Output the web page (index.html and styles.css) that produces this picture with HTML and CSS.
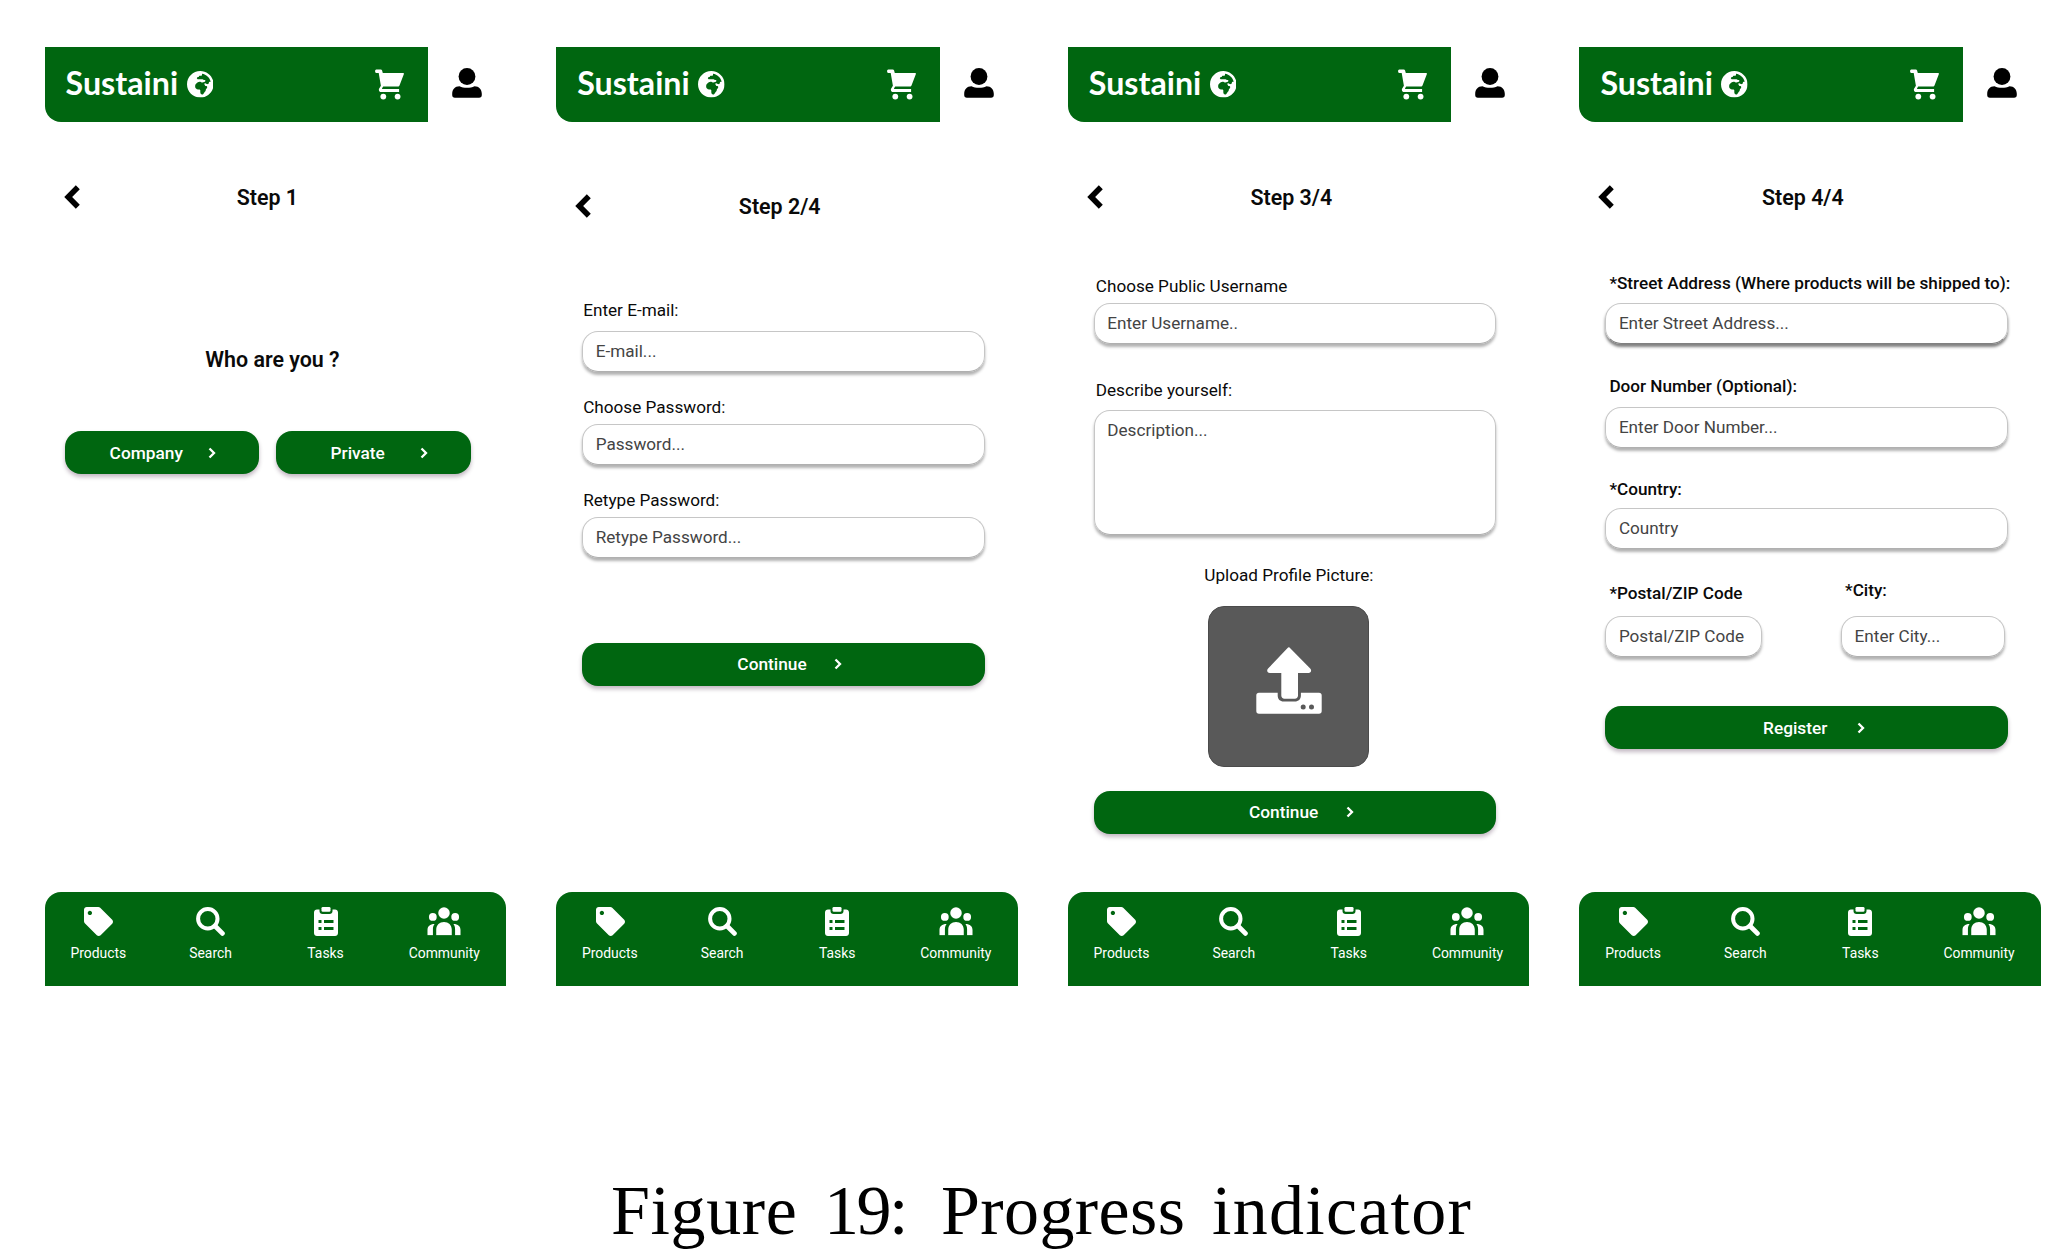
FILE: index.html
```
<!DOCTYPE html>
<html lang="en">
<head>
<meta charset="utf-8">
<title>Sustaini sign-up</title>
<link rel="stylesheet" href="styles.css">
</head>
<body>
<svg class="sprite" aria-hidden="true">
  <symbol id="globe" viewBox="0 8 496 496"><path d="M248 8C111.03 8 0 119.03 0 256s111.03 248 248 248 248-111.03 248-248S384.97 8 248 8zm160 215.5v6.93c0 5.87-3.32 11.24-8.57 13.86l-15.39 7.7a15.485 15.485 0 0 1-15.53-.97l-18.21-12.14a15.52 15.52 0 0 0-13.5-1.81l-2.65.88c-9.7 3.23-13.66 14.79-7.99 23.3l13.24 19.86c2.87 4.31 7.71 6.9 12.89 6.9h8.21c8.56 0 15.5 6.94 15.5 15.5v11.34c0 3.35-1.09 6.62-3.1 9.3l-18.74 24.98c-1.42 1.9-2.39 4.1-2.83 6.43l-4.3 22.83c-.62 3.29-2.29 6.29-4.76 8.56a159.608 159.608 0 0 0-25 29.16l-13.03 19.55a27.756 27.756 0 0 1-23.09 12.36c-10.51 0-20.12-5.94-24.82-15.34a78.902 78.902 0 0 1-8.33-35.29V367.5c0-8.56-6.94-15.5-15.5-15.5h-25.88c-14.49 0-28.38-5.76-38.63-16a54.659 54.659 0 0 1-16-38.63v-14.06c0-17.19 8.1-33.38 21.85-43.7l27.58-20.69a54.663 54.663 0 0 1 32.78-10.93h.89c8.48 0 16.85 1.97 24.43 5.77l14.72 7.36c3.68 1.84 7.93 2.14 11.83.84l47.31-15.77c6.33-2.11 10.6-8.03 10.6-14.7 0-8.56-6.94-15.5-15.5-15.5h-10.09c-4.11 0-8.05-1.63-10.96-4.54l-6.92-6.92a15.493 15.493 0 0 0-10.96-4.54H199.5c-8.56 0-15.5-6.94-15.5-15.5v-4.4c0-7.11 4.84-13.31 11.74-15.04l14.45-3.61c3.74-.94 7-3.23 9.14-6.44l8.08-12.11c2.87-4.31 7.71-6.9 12.89-6.9h24.21c8.56 0 15.5-6.94 15.5-15.5v-21.7C359.23 71.63 422.86 131.02 441.93 208H423.5c-8.56 0-15.5 6.94-15.5 15.5z"/></symbol>
  <symbol id="cart" viewBox="0 0 29 31"><path d="M1.3.6h4.4c.7 0 1.2.4 1.400 1L7.800 4h20.400c.6 0 .9.5.7 1L24.600 16.300c-.3.800-.900 1.300-1.700 1.300H8.200l-1.100 1.600c-.2.400 0 .9.500.9h16.500v2.900H6.300c-2 0-3-2-2.100-3.600l1.700-2.700L3.700 4.100H1.300C-.3 4.100-.3.600 1.300.600z"/><circle cx="8.300" cy="27.600" r="2.900"/><circle cx="22.600" cy="27.600" r="2.900"/></symbol>
  <symbol id="user" viewBox="0 0 30 30"><circle cx="15" cy="8.500" r="8.400"/><path d="M7.500 18.200c2.200 1 4.600 1.600 7.500 1.600s5.300-.6 7.500-1.600c4.600.1 7.300 3.300 7.300 7.600V27c0 1.700-1 2.700-2.700 2.700H2.900C1.200 29.700.2 28.700.2 27v-1.200c0-4.300 2.700-7.500 7.300-7.600z"/></symbol>
  <symbol id="back" viewBox="0 0 18 26"><path d="M13.800 3.300 4.200 13l9.600 9.700" fill="none" stroke="currentColor" stroke-width="5.600"/></symbol>
  <symbol id="next" viewBox="0 0 8 12"><path d="M1.500 1.500 6 6 1.500 10.500" fill="none" stroke="currentColor" stroke-width="2.300"/></symbol>
  <symbol id="tag" viewBox="0 0 512 512"><path d="M0 252.118V48C0 21.490 21.490 0 48 0h204.118a48 48 0 0 1 33.941 14.059l211.882 211.882c18.745 18.745 18.745 49.137 0 67.882L293.823 497.941c-18.745 18.745-49.137 18.745-67.882 0L14.059 286.059A48 48 0 0 1 0 252.118zM104 66c-21 0-38 17-38 38s17 38 38 38 38-17 38-38-17-38-38-38z"/></symbol>
  <symbol id="search" viewBox="0 0 29 29"><circle cx="11.800" cy="11.800" r="9.700" fill="none" stroke="currentColor" stroke-width="4"/><path d="m19 19 7.400 7.400" stroke="currentColor" stroke-width="4.800" stroke-linecap="round"/></symbol>
  <symbol id="tasks" viewBox="0 0 24 29"><path fill-rule="evenodd" d="M3 2.500h2.500V4c0 1.800 1.200 3 3 3h7c1.800 0 3-1.200 3-3V2.500H21c1.700 0 3 1.300 3 3V26c0 1.700-1.300 3-3 3H3c-1.700 0-3-1.300-3-3V5.500c0-1.700 1.300-3 3-3zM4.500 13v3h3v-3zm5.500 0v3h9.500v-3zm-5.500 7v3h3v-3zm5.500 0v3h9.500v-3z"/><rect x="7.500" y="0" width="9" height="4.800" rx="1.300"/></symbol>
  <symbol id="people" viewBox="0 0 35 29"><circle cx="17.500" cy="6" r="5.900"/><circle cx="6" cy="10" r="4"/><circle cx="29" cy="10" r="4"/><path d="M9.500 29v-6c0-4.800 3.400-7.800 8-7.800s8 3 8 7.800v6zM.500 29v-5.500c0-3.800 2.500-6.200 7.300-6.200-1.300 1.700-1.700 3.300-1.700 5.500V29zM34.500 29v-5.500c0-3.800-2.500-6.200-7.300-6.200 1.300 1.700 1.700 3.300 1.700 5.500V29z"/></symbol>
  <symbol id="upload" viewBox="0 0 66 68"><path d="M33.500.6 54.200 21.500c1.800 1.800.8 4.500-1.700 4.500H42v22.500c0 2-1.200 3.200-3.200 3.200H28.500c-2 0-3.200-1.200-3.200-3.200V26H13.800c-2.500 0-3.500-2.700-1.700-4.500L31.600.9c.6-.6 1.300-.7 1.900-.3z"/><path fill-rule="evenodd" d="M3 45.700h18.700v2.800c0 3.800 2.300 6 6 6h11c3.800 0 6.200-2.200 6.200-6v-2.800H63c1.700 0 2.700 1 2.700 2.700V64c0 1.700-1 2.700-2.700 2.700H3c-1.700 0-2.700-1-2.700-2.700V48.400c0-1.700 1-2.700 2.700-2.700zM47.200 57.500a2.500 2.500 0 1 0 0 5 2.500 2.500 0 0 0 0-5zm8.300 0a2.500 2.500 0 1 0 0 5 2.500 2.500 0 0 0 0-5z"/></symbol>
</svg>

<main class="screens">
  <section class="phone welcome">
    <header class="top">
      <div class="bar"><span class="brand">Sustaini</span><svg class="globe"><use href="#globe"/></svg><svg class="cart"><use href="#cart"/></svg></div>
      <svg class="user"><use href="#user"/></svg>
    </header>
    <div class="step"><svg class="back"><use href="#back"/></svg><h2>Step 1</h2></div>
    <div class="content">
      <h2 class="question">Who are you ?</h2>
      <div class="choices">
        <div class="button"><span>Company</span><svg><use href="#next"/></svg></div>
        <div class="button"><span>Private</span><svg><use href="#next"/></svg></div>
      </div>
    </div>
    <nav class="tabs">
      <div class="tab"><svg class="i-tag"><use href="#tag"/></svg><span>Products</span></div>
      <div class="tab"><svg class="i-search"><use href="#search"/></svg><span>Search</span></div>
      <div class="tab"><svg class="i-tasks"><use href="#tasks"/></svg><span>Tasks</span></div>
      <div class="tab"><svg class="i-people"><use href="#people"/></svg><span>Community</span></div>
    </nav>
  </section>

  <section class="phone account">
    <header class="top">
      <div class="bar"><span class="brand">Sustaini</span><svg class="globe"><use href="#globe"/></svg><svg class="cart"><use href="#cart"/></svg></div>
      <svg class="user"><use href="#user"/></svg>
    </header>
    <div class="step"><svg class="back"><use href="#back"/></svg><h2>Step 2/4</h2></div>
    <div class="content">
      <div class="field email"><div class="label">Enter E-mail:</div><div class="input">E-mail...</div></div>
      <div class="field password"><div class="label">Choose Password:</div><div class="input">Password...</div></div>
      <div class="field"><div class="label">Retype Password:</div><div class="input">Retype Password...</div></div>
      <div class="button wide"><span>Continue</span><svg><use href="#next"/></svg></div>
    </div>
    <nav class="tabs">
      <div class="tab"><svg class="i-tag"><use href="#tag"/></svg><span>Products</span></div>
      <div class="tab"><svg class="i-search"><use href="#search"/></svg><span>Search</span></div>
      <div class="tab"><svg class="i-tasks"><use href="#tasks"/></svg><span>Tasks</span></div>
      <div class="tab"><svg class="i-people"><use href="#people"/></svg><span>Community</span></div>
    </nav>
  </section>

  <section class="phone profile">
    <header class="top">
      <div class="bar"><span class="brand">Sustaini</span><svg class="globe"><use href="#globe"/></svg><svg class="cart"><use href="#cart"/></svg></div>
      <svg class="user"><use href="#user"/></svg>
    </header>
    <div class="step"><svg class="back"><use href="#back"/></svg><h2>Step 3/4</h2></div>
    <div class="content">
      <div class="field username"><div class="label">Choose Public Username</div><div class="input">Enter Username..</div></div>
      <div class="field about"><div class="label">Describe yourself:</div><div class="input area">Description...</div></div>
      <div class="picture">
        <div class="label">Upload Profile Picture:</div>
        <div class="drop"><svg><use href="#upload"/></svg></div>
      </div>
      <div class="button wide"><span>Continue</span><svg><use href="#next"/></svg></div>
    </div>
    <nav class="tabs">
      <div class="tab"><svg class="i-tag"><use href="#tag"/></svg><span>Products</span></div>
      <div class="tab"><svg class="i-search"><use href="#search"/></svg><span>Search</span></div>
      <div class="tab"><svg class="i-tasks"><use href="#tasks"/></svg><span>Tasks</span></div>
      <div class="tab"><svg class="i-people"><use href="#people"/></svg><span>Community</span></div>
    </nav>
  </section>

  <section class="phone address">
    <header class="top">
      <div class="bar"><span class="brand">Sustaini</span><svg class="globe"><use href="#globe"/></svg><svg class="cart"><use href="#cart"/></svg></div>
      <svg class="user"><use href="#user"/></svg>
    </header>
    <div class="step"><svg class="back"><use href="#back"/></svg><h2>Step 4/4</h2></div>
    <div class="content">
      <div class="field street"><div class="label">*Street Address (Where products will be shipped to):</div><div class="input focus">Enter Street Address...</div></div>
      <div class="field door"><div class="label">Door Number (Optional):</div><div class="input">Enter Door Number...</div></div>
      <div class="field country"><div class="label">*Country:</div><div class="input">Country</div></div>
      <div class="pair">
        <div class="field postal"><div class="label">*Postal/ZIP Code</div><div class="input">Postal/ZIP Code</div></div>
        <div class="field city"><div class="label">*City:</div><div class="input">Enter City...</div></div>
      </div>
      <div class="button wide"><span>Register</span><svg><use href="#next"/></svg></div>
    </div>
    <nav class="tabs">
      <div class="tab"><svg class="i-tag"><use href="#tag"/></svg><span>Products</span></div>
      <div class="tab"><svg class="i-search"><use href="#search"/></svg><span>Search</span></div>
      <div class="tab"><svg class="i-tasks"><use href="#tasks"/></svg><span>Tasks</span></div>
      <div class="tab"><svg class="i-people"><use href="#people"/></svg><span>Community</span></div>
    </nav>
  </section>
</main>

<p class="caption"><span class="w1">Figure</span><span class="w2">19:</span><span class="w3">Progress</span><span class="w4">indicator</span></p>
</body>
</html>
```
FILE: styles.css
```
* { box-sizing: border-box; }
body { margin: 0; width: 2054px; height: 1254px; overflow: hidden; background: #fff; color: #0a0a0a; font-family: Roboto, "Liberation Sans", sans-serif; font-size: 17.15px; }
svg { display: block; flex: none; fill: currentColor; }
h2 { margin: 0; font-size: 21.4px; line-height: 26px; font-weight: 600; }
.sprite { display: none; }

.screens { display: flex; gap: 50px; padding: 46.500px 0 0 44.6px; }
.phone { flex: none; display: flex; flex-direction: column; width: 461.6px; height: 939.8px; }

/* header */
.top { display: flex; align-items: center; height: 75px; }
.bar { display: flex; align-items: center; width: 383.4px; height: 100%; padding: 0 24px 0 21px; background: #006610; color: #fff; border-bottom-left-radius: 16px; }
.brand { font-family: Lato, "Liberation Sans", sans-serif; font-weight: 700; font-size: 32.200px; line-height: 38px; padding-bottom: 2px; }
.globe { width: 26.600px; height: 26.600px; margin: 1px 0 0 8.500px; }
.cart { width: 29px; height: 31px; margin-left: auto; }
.user { width: 30px; height: 30px; margin: 0 0 2px 24px; color: #000; }

/* step heading */
.step { display: grid; grid-template-columns: 1fr auto 1fr; align-items: center; margin-top: 61.500px; padding: 0 33.600px 0 19px; height: 26px; }
.step h2 { padding-top: 2px; height: 28px; }
.back { width: 18px; height: 26px; color: #000; }
.welcome .step { padding-right: 35px; }
.account .step { margin-top: 70px; }
.account .back { margin-left: -.5px; }

.content { width: 402.700px; margin-left: 26px; }

/* form fields */
.label { padding-left: 2px; height: 20px; line-height: 20px; white-space: nowrap; }
.input { height: 41px; margin-top: 7px; padding: 9px 12.500px; line-height: 21px; color: #444; border: 1px solid #c6c6c6; border-bottom-color: #b0b0b0; border-radius: 16px; box-shadow: 0 3px 3px rgba(0, 0, 0, .3); white-space: nowrap; }
.input.focus { border-bottom-color: #808080; box-shadow: 0 3px 3px rgba(0, 0, 0, .5); }
.input.area { height: 125px; }
.field { margin-top: 25px; }
.account .label { padding-left: 1px; }
.email { margin-top: 82px; }
.email .input { margin-top: 11px; }
.username { margin-top: 67px; }
.about { margin-top: 35.500px; }
.about .input { margin-top: 10.500px; }

/* buttons */
.button { display: flex; align-items: center; justify-content: center; height: 43px; padding-right: 24px; border-radius: 16px; background: #006610; color: #fff; font-weight: 500; font-size: 17.300px; box-shadow: 0 3px 4px rgba(40, 0, 40, .28); }
.button span { width: 124px; text-align: center; }
.button svg { width: 8px; height: 12px; }
.wide { padding-right: 15px; }
.account .wide { margin-top: 85px; }

.welcome .content { width: 406px; margin-left: 20.400px; }
.question { margin-top: 138px; text-align: center; padding-left: 9px; }
.choices { display: grid; grid-template-columns: 1fr 1fr; gap: 17px; margin-top: 58px; }

/* profile picture */
.picture { display: flex; flex-direction: column; align-items: center; margin-top: 30px; padding-right: 12.500px; }
.picture .label { padding: 0; }
.drop { display: flex; align-items: center; justify-content: center; width: 161px; height: 161px; margin-top: 20.500px; padding-bottom: 10px; border: 1.500px solid #4b4b4b; border-radius: 16px; background: #595959; color: #fff; }
.drop svg { width: 66px; height: 68px; }
.profile .wide { margin-top: 24px; }

/* address form */
.address .label { padding-left: 4px; font-weight: 500; }
.street { margin-top: 63.600px; }
.street .input { margin-top: 10.500px; }
.door { margin-top: 31.500px; }
.door .input { margin-top: 11px; }
.country { margin-top: 31px; }
.country .input { margin-top: 9.500px; }
.pair { display: flex; justify-content: space-between; align-items: flex-end; margin: 31px 3.500px 0 0; }
.pair .field { margin-top: 0; }
.postal { width: 156.500px; }
.city { width: 163.500px; }
.postal .input { margin-top: 13.500px; }
.city .input { margin-top: 16px; }
.address .wide { margin-top: 49px; }

/* bottom navigation */
.tabs { display: grid; grid-template-columns: 108.400px 115.200px 114.800px 122.600px; height: 94.300px; margin-top: auto; padding-top: 15px; background: #006610; color: #fff; border-radius: 16px 16px 0 0; font-size: 13.900px; }
.tab { display: flex; flex-direction: column; align-items: center; line-height: 18px; gap: 8px; }
.tab:first-child span { margin-left: -1px; }
.i-tag { width: 29px; height: 29px; }
.i-search { width: 29px; height: 29px; }
.i-tasks { width: 24px; height: 29px; }
.i-people { width: 34px; height: 28.500px; margin-bottom: .5px; }

/* figure caption */
.caption { display: flex; margin: 184.700px 0 0 611px; font: 70px/80px "Liberation Serif", serif; color: #000; }
.w1 { letter-spacing: .6px; width: 213px; }
.w2 { letter-spacing: -2.500px; width: 117px; }
.w3 { letter-spacing: .4px; width: 271px; }
.w4 { letter-spacing: 1.250px; }
```
